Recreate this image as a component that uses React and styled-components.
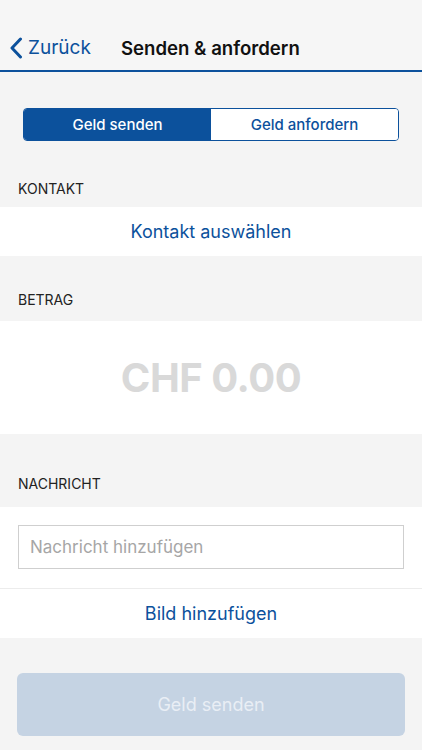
import React from "react";
import styled, { createGlobalStyle } from "styled-components";

const GlobalStyle = createGlobalStyle`
  html, body {
    margin: 0;
    padding: 0;
    background: #f4f4f4;
    font-family: Inter, "Noto Sans", "Liberation Sans", sans-serif;
  }
  * { box-sizing: border-box; }
`;

const BLUE = "#0c519c";

const Page = styled.div`
  width: 422px;
  height: 750px;
  background: #f4f4f4;
  display: flex;
  flex-direction: column;
  overflow: hidden;
`;

const NavBar = styled.div`
  height: 72px;
  border-bottom: 2px solid ${BLUE};
  display: flex;
  align-items: flex-end;
  padding: 0 0 11px 9px;
  background: #f6f6f6;
`;

const BackButton = styled.div`
  display: flex;
  align-items: center;
  color: ${BLUE};
  font-size: 19px;
  gap: 5px;
  width: 112px;
`;

const Title = styled.div`
  font-size: 18.6px;
  font-weight: 600;
  color: #111;
`;

const Segments = styled.div`
  margin: 36px 23px 0;
  height: 33px;
  display: flex;
  border: 1px solid ${BLUE};
  border-radius: 4px;
  overflow: hidden;
`;

const Segment = styled.div`
  flex: 1;
  display: flex;
  align-items: center;
  justify-content: center;
  font-size: 15px;
  font-weight: 500;
  background: ${(p) => (p.$active ? BLUE : "#fff")};
  color: ${(p) => (p.$active ? "#fff" : BLUE)};
`;

const SectionLabel = styled.div`
  font-size: 14px;
  color: #222;
  padding: 0 18px;
  height: ${(p) => p.$h}px;
  display: flex;
  align-items: flex-end;
  padding-bottom: ${(p) => p.$pb}px;
`;

const LinkRow = styled.div`
  background: #fff;
  height: ${(p) => (p.$divider ? 50 : 49)}px;
  display: flex;
  align-items: center;
  justify-content: center;
  color: ${BLUE};
  font-size: 18px;
  border-top: ${(p) => (p.$divider ? "1px solid #ececec" : "none")};
`;

const AmountPanel = styled.div`
  background: #fff;
  height: 113px;
  display: flex;
  align-items: center;
  justify-content: center;
  color: #d9d9d9;
  font-size: 40px;
  font-weight: 700;
  letter-spacing: -0.5px;
`;

const MessagePanel = styled.div`
  background: #fff;
  padding: 18px 18px 19px;
`;

const MessageInput = styled.div`
  height: 44px;
  border: 1px solid #cfcfcf;
  display: flex;
  align-items: center;
  padding: 0 11px;
  color: #a6a6a6;
  font-size: 17px;
`;

const SubmitButton = styled.div`
  margin: 35px 17px 0;
  height: 63px;
  border-radius: 6px;
  background: #c5d3e3;
  color: #e9eef5;
  font-size: 18px;
  display: flex;
  align-items: center;
  justify-content: center;
`;

const Chevron = () => (
  <svg width="14" height="22" viewBox="0 0 14 22">
    <path d="M11.5 2 L3 11 L11.5 20" fill="none" stroke={BLUE} strokeWidth="3" strokeLinecap="round" strokeLinejoin="round" />
  </svg>
);

export default function App() {
  return (
    <Page>
      <GlobalStyle />
      <NavBar>
        <BackButton>
          <Chevron />
          Zurück
        </BackButton>
        <Title>Senden &amp; anfordern</Title>
      </NavBar>
      <Segments>
        <Segment $active>Geld senden</Segment>
        <Segment>Geld anfordern</Segment>
      </Segments>
      <SectionLabel $h={66} $pb={10}>KONTAKT</SectionLabel>
      <LinkRow>Kontakt auswählen</LinkRow>
      <SectionLabel $h={65} $pb={13}>BETRAG</SectionLabel>
      <AmountPanel>CHF 0.00</AmountPanel>
      <SectionLabel $h={73} $pb={15}>NACHRICHT</SectionLabel>
      <MessagePanel>
        <MessageInput>Nachricht hinzufügen</MessageInput>
      </MessagePanel>
      <LinkRow $divider>Bild hinzufügen</LinkRow>
      <SubmitButton>Geld senden</SubmitButton>
    </Page>
  );
}
